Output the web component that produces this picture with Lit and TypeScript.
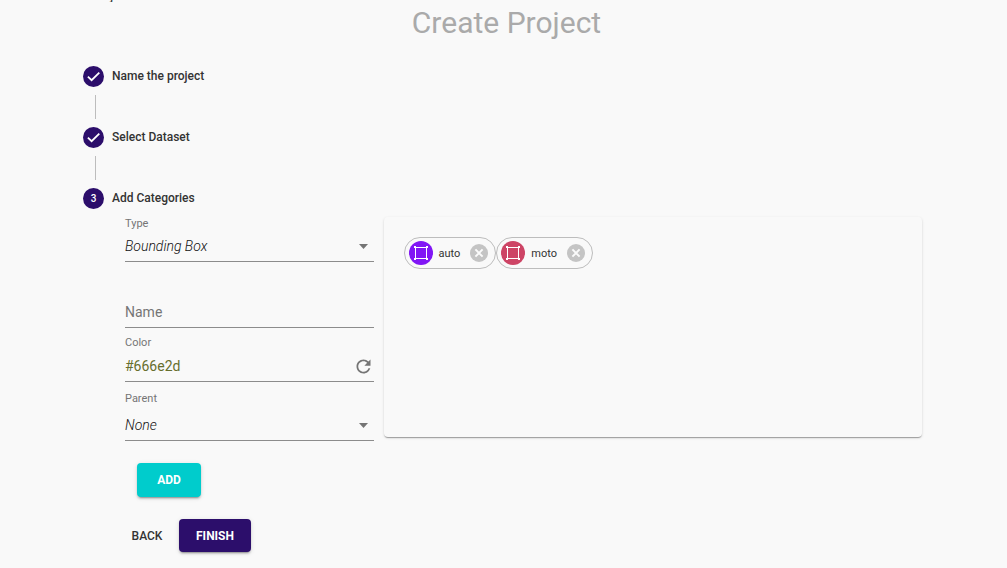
import { LitElement, html, css, svg } from "lit";
import { customElement, property, state } from "lit/decorators.js";
import { styleMap } from "lit/directives/style-map.js";

interface Category {
  name: string;
  color: string;
}

@customElement("step-header")
class StepHeader extends LitElement {
  @property() label = "";
  @property({ type: Number }) index = 1;
  @property({ type: Boolean }) done = false;

  static styles = css`
    :host {
      display: flex;
      align-items: flex-start;
      gap: 8px;
      height: 21px;
      color: #333333;
      font-size: 12px;
      font-weight: 500;
      line-height: 20px;
    }
    .badge {
      width: 21px;
      height: 21px;
      border-radius: 50%;
      background: #2c0e6b;
      color: #ffffff;
      display: flex;
      align-items: center;
      justify-content: center;
      font-size: 10px;
    }
    .check {
      width: 21px;
      height: 21px;
      fill: none;
      stroke: #ffffff;
      stroke-width: 1.8;
    }
  `;

  render() {
    return html`
      <span class="badge">
        ${this.done
          ? html`<svg class="check" viewBox="0 0 21 21" aria-hidden="true">
              <path d="M4.9 10.6 L8.6 14.2 L16.3 6.6" />
            </svg>`
          : this.index}
      </span>
      <span class="label">${this.label}</span>
    `;
  }
}

@customElement("category-chip")
class CategoryChip extends LitElement {
  @property() name = "";
  @property() color = "";

  static styles = css`
    :host {
      display: inline-flex;
      align-items: center;
      box-sizing: border-box;
      height: 32px;
      padding: 0 7px 0 4px;
      border: 1px solid #bdbdbd;
      border-radius: 16px;
      color: #333333;
      font-size: 11px;
    }
    .avatar {
      display: flex;
      width: 24px;
      height: 24px;
      border-radius: 50%;
    }
    .box {
      width: 24px;
      height: 24px;
      fill: none;
      stroke: #ffffff;
    }
    .corner {
      fill: #ffffff;
      stroke: none;
    }
    .name {
      padding: 0 10px 0 6px;
    }
    .remove {
      display: flex;
      padding: 0;
      border: 0;
      background: none;
      cursor: pointer;
    }
    .cross {
      width: 18px;
      height: 18px;
      fill: #c4c4c4;
    }
    .mark {
      stroke: #fafafa;
      stroke-width: 2;
    }
  `;

  render() {
    const corners = [
      [5, 5],
      [17, 5],
      [5, 17],
      [17, 17],
    ];
    return html`
      <span class="avatar" style=${styleMap({ background: this.color })}>
        <svg class="box" viewBox="0 0 24 24" aria-hidden="true">
          <rect x="6.5" y="6.5" width="11" height="11" />
          ${corners.map(
            ([x, y]) =>
              svg`<rect class="corner" x=${x} y=${y} width="2" height="2" />`
          )}
        </svg>
      </span>
      <span class="name">${this.name}</span>
      <button
        class="remove"
        aria-label="Remove"
        @click=${() => this.dispatchEvent(new CustomEvent("remove"))}
      >
        <svg class="cross" viewBox="0 0 18 18" aria-hidden="true">
          <circle cx="9" cy="9" r="9" />
          <path class="mark" d="M5.4 5.4 L12.6 12.6 M12.6 5.4 L5.4 12.6" />
        </svg>
      </button>
    `;
  }
}

@customElement("app-root")
class AppRoot extends LitElement {
  @state() categories: Category[] = [
    { name: "auto", color: "#8116f5" },
    { name: "moto", color: "#cd4465" },
  ];
  @state() color = "#666e2d";

  static styles = css`
    :host {
      display: flow-root;
      min-height: 100vh;
      box-sizing: border-box;
      background: #f9f9f9;
      color: #333333;
      font-family: Roboto, sans-serif;
      font-size: 14px;
    }
    .crumb {
      height: 2px;
      padding-left: 110px;
      overflow: hidden;
      display: flex;
      align-items: flex-end;
      font-size: 14px;
      line-height: 14px;
    }
    .title {
      margin: 0;
      padding: 1px 0 0 6px;
      text-align: center;
      color: #aaaaaa;
      font-size: 30px;
      font-weight: 400;
      line-height: 40px;
    }
    .stepper {
      margin: 23px 85px 0 83px;
    }
    .connector {
      width: 1px;
      height: 24px;
      margin: 8px 0 8px 12px;
      background: #bdbdbd;
    }
    .content {
      display: grid;
      grid-template-columns: 6fr 13fr;
      gap: 10px;
      align-items: start;
      margin: 8px 0 0 42px;
    }
    .field {
      display: flex;
      flex-direction: column;
      position: relative;
      border-bottom: 1px solid #8c8c8c;
    }
    .field.name {
      margin-top: 35px;
    }
    .field.color {
      margin-top: 8px;
    }
    .field.parent {
      margin-top: 10px;
    }
    .caption {
      color: #757575;
      font-size: 11px;
      line-height: 14px;
    }
    .control {
      appearance: none;
      box-sizing: border-box;
      width: 100%;
      height: 30px;
      margin: 0;
      padding: 0;
      border: 0;
      outline: 0;
      background: none;
      color: #333333;
      font: 400 14px/20px Roboto, sans-serif;
    }
    .control::placeholder {
      color: #757575;
      opacity: 1;
    }
    .select {
      font-style: italic;
      font-weight: 300;
      color: #111111;
    }
    .color .control {
      height: 31px;
      padding-top: 1px;
    }
    .parent .select {
      height: 34px;
      padding-top: 4px;
    }
    .caret,
    .refresh {
      position: absolute;
      color: #757575;
    }
    .caret {
      right: 6px;
      bottom: 12px;
      width: 9px;
      height: 5px;
      fill: currentColor;
      pointer-events: none;
    }
    .refresh {
      right: 0;
      bottom: 4px;
      display: flex;
      padding: 0;
      border: 0;
      background: none;
      cursor: pointer;
    }
    .refresh-icon {
      width: 21px;
      height: 21px;
      fill: currentColor;
    }
    .card {
      display: flex;
      flex-wrap: wrap;
      align-content: flex-start;
      box-sizing: border-box;
      min-height: 220px;
      padding: 20px;
      border-radius: 4px;
      box-shadow: 0 2px 1px -1px rgba(0, 0, 0, 0.2),
        0 1px 1px 0 rgba(0, 0, 0, 0.14), 0 1px 3px 0 rgba(0, 0, 0, 0.12);
    }
    .button {
      height: 34px;
      padding: 0 16px;
      border: 0;
      border-radius: 4px;
      background: none;
      color: #333333;
      font: 500 12px/20px Roboto, sans-serif;
      text-transform: uppercase;
      cursor: pointer;
    }
    .raised {
      color: #ffffff;
      font-weight: 700;
      box-shadow: 0 3px 1px -2px rgba(0, 0, 0, 0.2),
        0 2px 2px 0 rgba(0, 0, 0, 0.14), 0 1px 5px 0 rgba(0, 0, 0, 0.12);
    }
    .add {
      margin: 22px 0 0 12px;
      min-width: 64px;
      background: #00cccc;
    }
    .finish {
      background: #2c0e6b;
      min-width: 72px;
    }
    .back {
      min-width: 64px;
      padding: 0;
    }
    .actions {
      display: flex;
      margin: 22px 0 0 32px;
    }
    .actions .button {
      height: 33px;
    }
  `;

  private drop(category: Category) {
    this.categories = this.categories.filter((c) => c !== category);
  }

  private shuffleColor() {
    const value = Math.floor(Math.random() * 0xffffff);
    this.color = "#" + value.toString(16).padStart(6, "0");
  }

  private caret() {
    return html`<svg class="caret" viewBox="0 0 9 5" aria-hidden="true">
      <path d="M0 0 H9 L4.5 5 Z" />
    </svg>`;
  }

  render() {
    return html`
      <div class="crumb">j</div>
      <h1 class="title">Create Project</h1>
      <main class="stepper">
        <step-header label="Name the project" .index=${1} done></step-header>
        <div class="connector"></div>
        <step-header label="Select Dataset" .index=${2} done></step-header>
        <div class="connector"></div>
        <step-header label="Add Categories" .index=${3}></step-header>
        <section class="content">
          <form class="form" @submit=${(e: Event) => e.preventDefault()}>
            <div class="field">
              <label class="caption" for="type">Type</label>
              <select class="control select" id="type">
                <option>Bounding Box</option>
              </select>
              ${this.caret()}
            </div>
            <div class="field name">
              <input
                class="control"
                id="name"
                aria-label="Name"
                placeholder="Name"
              />
            </div>
            <div class="field color">
              <label class="caption" for="color">Color</label>
              <input
                class="control"
                id="color"
                style=${styleMap({ color: this.color })}
                .value=${this.color}
              />
              <button
                class="refresh"
                type="button"
                aria-label="Refresh"
                @click=${this.shuffleColor}
              >
                <svg class="refresh-icon" viewBox="0 0 24 24" aria-hidden="true">
                  <path
                    d="M17.65 6.35C16.2 4.9 14.21 4 12 4c-4.42 0-7.99 3.58-7.99 8s3.57 8 7.99 8c3.73 0 6.84-2.55 7.73-6h-2.08c-.82 2.33-3.04 4-5.65 4-3.31 0-6-2.69-6-6s2.69-6 6-6c1.66 0 3.14.69 4.22 1.78L13 11h7V4l-2.35 2.35z"
                  />
                </svg>
              </button>
            </div>
            <div class="field parent">
              <label class="caption" for="parent">Parent</label>
              <select class="control select" id="parent">
                <option>None</option>
              </select>
              ${this.caret()}
            </div>
            <button class="button raised add" type="submit">Add</button>
          </form>
          <div class="card">
            ${this.categories.map(
              (c) => html`<category-chip
                .name=${c.name}
                .color=${c.color}
                @remove=${() => this.drop(c)}
              ></category-chip>`
            )}
          </div>
        </section>
        <div class="actions">
          <button class="button back" type="button">Back</button>
          <button class="button raised finish" type="button">Finish</button>
        </div>
      </main>
    `;
  }
}
